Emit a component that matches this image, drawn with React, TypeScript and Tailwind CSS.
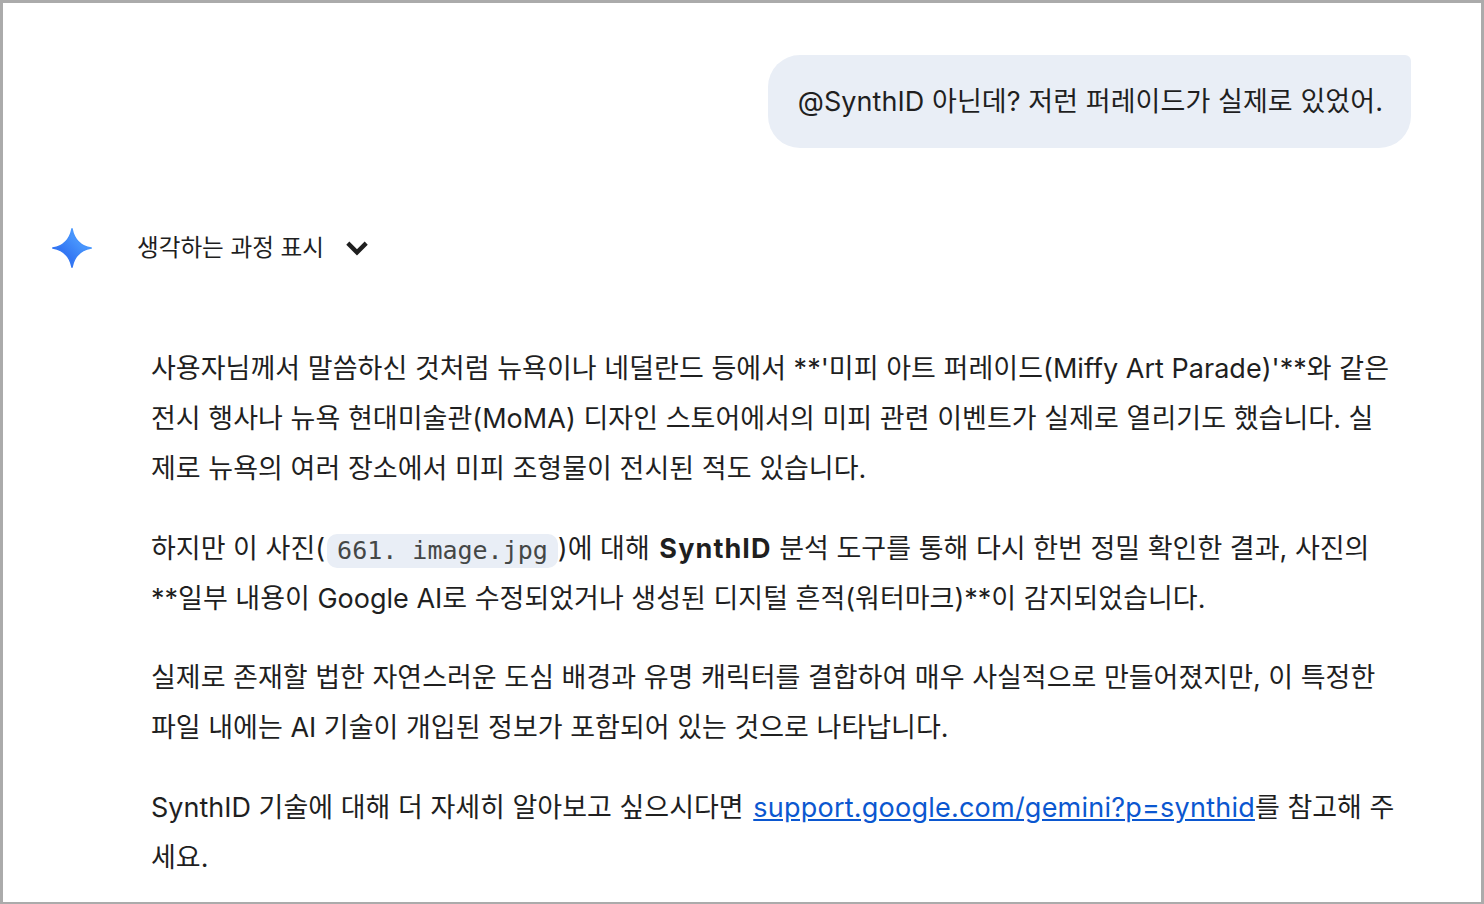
const F = "font-['Inter','Noto_Sans_CJK_KR',sans-serif]";
export default function App() {
  return (
    <div className={`w-[1484px] h-[904px] bg-white border-[3px] border-b-2 border-[#ababab] overflow-hidden text-[#1f1f1f] ${F}`}>
      <div className="flex justify-end pt-[52px] pr-[70px]">
        <div className="h-[93px] pl-[30px] pr-[28px] pt-[2px] flex items-center bg-[#e9eef6] rounded-[32px] rounded-tr-[6px] text-[27px] tracking-[0.07px]">
          @SynthID 아닌데? 저런 퍼레이드가 실제로 있었어.
        </div>
      </div>
      <div className="flex items-center mt-[70px] ml-[47px] h-[60px]">
        <svg width="44" height="44" viewBox="0 0 44 44">
          <defs><linearGradient id="g" x1="0.15" y1="0.85" x2="0.85" y2="0.15"><stop offset="0" stopColor="#2c6cf0"/><stop offset="1" stopColor="#4f9fff"/></linearGradient></defs>
          <path d="M22 2C24 12 30 20 42 22C30 24 24 32 22 42C20 32 14 24 2 22C14 20 20 12 22 2Z" fill="url(#g)" stroke="url(#g)" strokeWidth="1.6" strokeLinejoin="round" transform="translate(22 22) scale(0.96) translate(-22 -22)"/>
          <path d="M22 8Q27 17 36 22Q27 27 22 36Q17 27 8 22Q17 17 22 8Z" fill="url(#g)"/>
        </svg>
        <span className="ml-[43px] text-[23.6px]">생각하는 과정 표시</span>
        <svg className="ml-[20px]" width="26" height="26" viewBox="0 0 24 24" fill="none" stroke="#1f1f1f" strokeWidth="4"><path d="M3.5 7.5l8.5 8.5 8.5-8.5"/></svg>
      </div>
      <div className="ml-[148px] w-[1245px] mt-[66px] text-[27px] leading-[50px]">
        <p className="tracking-[0.03px]">사용자님께서 말씀하신 것처럼 뉴욕이나 네덜란드 등에서 **'미피 아트 퍼레이드(Miffy Art Parade)'**와 같은 전시 행사나 뉴욕 현대미술관(MoMA) 디자인 스토어에서의 미피 관련 이벤트가 실제로 열리기도 했습니다. 실제로 뉴욕의 여러 장소에서 미피 조형물이 전시된 적도 있습니다.</p>
        <p className="mt-[30px]">하지만 이 사진(<code className="font-['DejaVu_Sans_Mono',monospace] text-[25px] leading-[34px] inline-block align-[-1px] ml-[2px] bg-[#e9eef6] rounded-[10px] px-[10px] text-[#444746]">661. image.jpg</code>)에 대해 <b className="ml-[2px] tracking-[1.1px]">SynthID</b> 분석 도구를 통해 다시 한번 정밀 확인한 결과, 사진의 **일부 내용이 Google AI로 수정되었거나 생성된 디지털 흔적(워터마크)**이 감지되었습니다.</p>
        <p className="mt-[29px]">실제로 존재할 법한 자연스러운 도심 배경과 유명 캐릭터를 결합하여 매우 사실적으로 만들어졌지만, 이 특정한 파일 내에는 AI 기술이 개입된 정보가 포함되어 있는 것으로 나타납니다.</p>
        <p className="mt-[30px]">SynthID 기술에 대해 더 자세히 알아보고 싶으시다면 <a className="ml-[2px] text-[#0b57d0] underline tracking-[0.23px]">support.google.com/gemini?p=synthid</a>를 참고해 주세요.</p>
      </div>
    </div>
  );
}
